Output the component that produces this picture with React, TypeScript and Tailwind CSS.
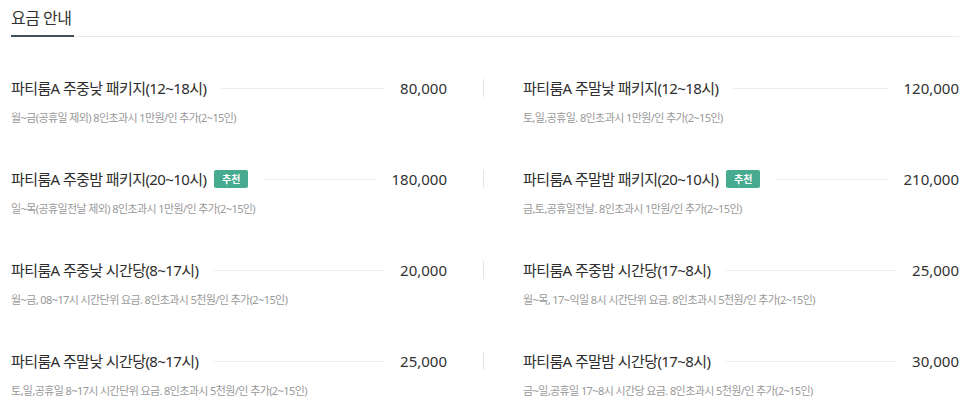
import React from 'react';

type Plan = { name: string; price: string; desc: string; best?: boolean };

const plans: Plan[] = [
  { name: '파티룸A 주중낮 패키지(12~18시)', price: '80,000', desc: '월~금(공휴일 제외) 8인초과시 1만원/인 추가(2~15인)' },
  { name: '파티룸A 주말낮 패키지(12~18시)', price: '120,000', desc: '토,일,공휴일. 8인초과시 1만원/인 추가(2~15인)' },
  { name: '파티룸A 주중밤 패키지(20~10시)', price: '180,000', desc: '일~목(공휴일전날 제외) 8인초과시 1만원/인 추가(2~15인)', best: true },
  { name: '파티룸A 주말밤 패키지(20~10시)', price: '210,000', desc: '금,토,공휴일전날. 8인초과시 1만원/인 추가(2~15인)', best: true },
  { name: '파티룸A 주중낮 시간당(8~17시)', price: '20,000', desc: '월~금, 08~17시 시간단위 요금. 8인초과시 5천원/인 추가(2~15인)' },
  { name: '파티룸A 주중밤 시간당(17~8시)', price: '25,000', desc: '월~목, 17~익일 8시 시간단위 요금. 8인초과시 5천원/인 추가(2~15인)' },
  { name: '파티룸A 주말낮 시간당(8~17시)', price: '25,000', desc: '토,일,공휴일 8~17시 시간단위 요금. 8인초과시 5천원/인 추가(2~15인)' },
  { name: '파티룸A 주말밤 시간당(17~8시)', price: '30,000', desc: '금~일,공휴일 17~8시 시간당 요금. 8인초과시 5천원/인 추가(2~15인)' },
];

function PlanItem({ plan, right }: { plan: Plan; right: boolean }) {
  return (
    <div className={right ? 'pl-[40px]' : 'pr-[36px]'}>
      <div className="relative flex items-center h-[18px]">
        {right && <span className="absolute left-[-40px] top-0 h-[18px] border-l border-[#e6e6e6]" />}
        <span className="text-[15px] leading-[18px] text-[#2e2e2e] tracking-[-0.6px] whitespace-nowrap">{plan.name}</span>
        {plan.best && (
          <span className="ml-[8px] h-[18px] w-[34px] rounded-[2px] bg-[#46ab8f] text-white text-[10px] font-bold leading-[18px] text-center">
            추천
          </span>
        )}
        <span className="flex-1 mx-[15px] border-t border-[#ececec]" />
        <span className="text-[15px] leading-[18px] text-[#333] whitespace-nowrap">{plan.price}</span>
      </div>
      <div className="mt-[14px] text-[11px] leading-[14px] text-[#999] tracking-[-0.6px] whitespace-nowrap">{plan.desc}</div>
    </div>
  );
}

export default function App() {
  return (
    <div
      className="w-[966px] h-[412px] bg-white pl-[11px] pr-[7px] overflow-hidden"
      style={{ fontFamily: '"Noto Sans", "Noto Sans CJK KR", sans-serif' }}
    >
      <div className="flex border-b border-[#e8e8e8]">
        <div className="pt-[6px] pb-[5px] border-b-2 border-[#3f5058] mb-[-1px] w-[63px]">
          <span className="text-[16px] leading-[22px] text-[#333] tracking-[-0.5px]">요금 안내</span>
        </div>
      </div>
      <div className="grid grid-cols-[472px_476px] gap-y-[45px] mt-[42px]">
        {plans.map((p, i) => (
          <PlanItem key={i} plan={p} right={i % 2 === 1} />
        ))}
      </div>
    </div>
  );
}
